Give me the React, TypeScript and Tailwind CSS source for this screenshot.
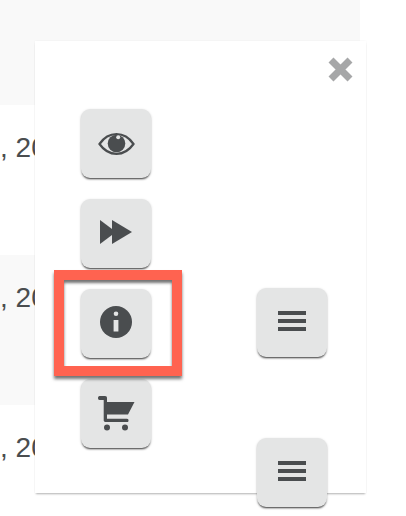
function Eye() {
  return (
    <svg width="37" height="24" viewBox="0 0 37 24" fill="none">
      <path d="M1.5 12C6 5.5 12 2.2 18.5 2.2S31 5.5 35.5 12C31 18.5 25 21.8 18.5 21.8S6 18.5 1.5 12Z" stroke="#4a4d4f" strokeWidth="2.2" />
      <circle cx="18.5" cy="11.5" r="8.8" fill="#4a4d4f" />
      <circle cx="20.2" cy="5.2" r="2" fill="#e4e5e5" />
    </svg>
  );
}

function Forward() {
  return (
    <svg className="mb-[3px]" width="32" height="24" viewBox="0 0 32 24" fill="#4a4d4f">
      <path d="M0 0L16 12L0 24Z" />
      <path d="M12 0L32 12L12 24Z" />
    </svg>
  );
}

function Info() {
  return (
    <svg className="mb-[3px]" width="32" height="32" viewBox="0 0 32 32">
      <circle cx="16" cy="16" r="16" fill="#4a4d4f" />
      <rect x="13.6" y="14" width="4.8" height="11.5" fill="#e4e5e5" />
      <circle cx="16" cy="7.7" r="2.3" fill="#e4e5e5" />
    </svg>
  );
}

function Cart() {
  return (
    <svg width="37" height="35" viewBox="0 0 37 35" fill="#4a4d4f">
      <path d="M1.5 0H7C8.5 0 9 0.8 9 2V6H36.5L30 18.5H9V22.7H29C30 22.7 30.5 23.5 30.5 24.4S30 26 29 26H7.5C6.3 26 5.7 25.3 5.7 24.3V4H1.5C0.5 4 0 3 0 2S0.5 0 1.5 0Z" />
      <circle cx="9" cy="31.5" r="3" />
      <circle cx="27" cy="31.5" r="3" />
    </svg>
  );
}

function Bars() {
  return (
    <div className="mb-[3px] flex flex-col gap-[4px]">
      <div className="h-[4px] w-[28px] bg-[#4a4d4f]" />
      <div className="h-[4px] w-[28px] bg-[#4a4d4f]" />
      <div className="h-[4px] w-[28px] bg-[#4a4d4f]" />
    </div>
  );
}

function Close() {
  return (
    <svg className="absolute left-[292px] top-[15px]" width="27" height="27" viewBox="0 0 27 27" fill="none">
      <path d="M4 4L23 23M23 4L4 23" stroke="#a6a7a8" strokeWidth="7" />
    </svg>
  );
}

function ActionButton({ children }: { children: React.ReactNode }) {
  return (
    <button className="flex h-[69px] w-[70px] items-center justify-center rounded-[9px] bg-[#e4e5e5] shadow-[0_2px_2px_-1px_rgba(0,0,0,0.7),0_1px_3px_rgba(0,0,0,0.18)]">
      {children}
    </button>
  );
}

const rows = [
  { h: 'h-[105px]', bg: 'bg-[#f9f9f9]', date: '' },
  { h: 'h-[150px]', bg: 'bg-white', date: ', 2018' },
  { h: 'h-[150px]', bg: 'bg-[#f9f9f9]', date: ', 2018' },
  { h: 'h-[111px]', bg: 'bg-white', date: ', 2018' },
];

export default function App() {
  return (
    <div className="relative h-[516px] w-[406px] overflow-hidden bg-white font-['Liberation_Sans',Arial,sans-serif]">
      <div className="w-[360px]">
        {rows.map((row, i) => (
          <div key={i} className={`${row.h} ${row.bg} pt-[26px] text-[28px] leading-[34px] text-[#4a4d4f]`}>
            {row.date}
          </div>
        ))}
      </div>

      <div className="absolute left-[35px] top-[41px] h-[452px] w-[331px] bg-white shadow-[0_2px_2px_-1px_rgba(0,0,0,0.3),0_0_2px_rgba(0,0,0,0.05)]">
        <Close />
        <div className="flex flex-col gap-[21px] pl-[46px] pt-[68px]">
          <ActionButton><Eye /></ActionButton>
          <ActionButton><Forward /></ActionButton>
          <ActionButton><Info /></ActionButton>
          <ActionButton><Cart /></ActionButton>
        </div>
        <div className="absolute left-[222px] top-[247px] flex flex-col gap-[81px]">
          <ActionButton><Bars /></ActionButton>
          <ActionButton><Bars /></ActionButton>
        </div>
      </div>

      <div className="absolute left-[54px] top-[270px] h-[106px] w-[128px] border-[10px] border-[#ff6350] shadow-[0_3px_3px_rgba(0,0,0,0.55),inset_0_3px_3px_rgba(0,0,0,0.55)]" />
    </div>
  );
}
